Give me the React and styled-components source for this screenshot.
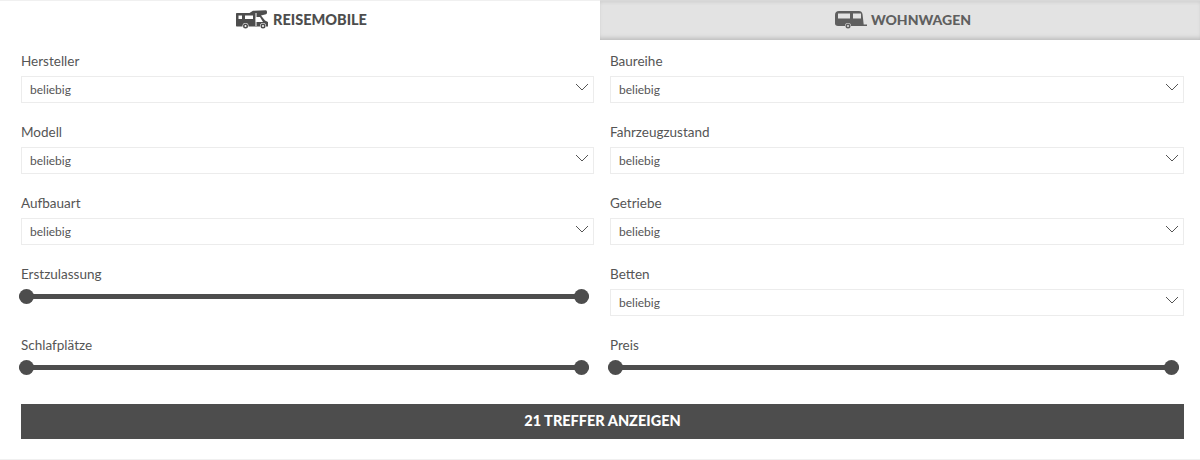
import React from 'react';
import styled, { createGlobalStyle } from 'styled-components';

const Global = createGlobalStyle`
  html, body { margin: 0; padding: 0; background: #fff; }
  body { font-family: "Lato", "Liberation Sans", sans-serif; color: #4d4d4d; }
`;

const Page = styled.div`
  width: 1200px;
  height: 460px;
  box-sizing: border-box;
  border-bottom: 1px solid #f0f0f0;
  overflow: hidden;
`;

const Tabs = styled.div`
  display: flex;
  height: 40px;
`;

const Tab = styled.div`
  flex: 0 0 600px;
  box-sizing: border-box;
  display: flex;
  align-items: center;
  justify-content: center;
  gap: ${({ $active }) => ($active ? '5px' : '4px')};
  padding: 0 0 2px ${({ $active }) => ($active ? '3px' : '6px')};
  font-size: ${({ $active }) => ($active ? '14.5px' : '14px')};
  font-weight: 900;
  color: ${({ $active }) => ($active ? '#4d4d4d' : '#5f5f5f')};
  background: ${({ $active }) => ($active ? '#fff' : '#e3e3e3')};
  border-top: 1px solid ${({ $active }) => ($active ? '#f0f0f0' : '#d8d8d8')};
  box-shadow: ${({ $active }) => ($active ? 'none' : 'inset 0 -4px 4px -2px #bdbdbd, inset 0 3px 3px -1px #d4d4d4')};
`;

const Form = styled.div`
  display: grid;
  grid-template-columns: 573px 574px;
  column-gap: 16px;
  row-gap: 11px;
  padding: 13px 16px 0 21px;
`;

const Field = styled.div`
  display: flex;
  flex-direction: column;
  height: 60px;
`;

const Label = styled.div`
  font-size: 13.5px;
  line-height: 16px;
  margin-bottom: 7px;
  color: #555;
`;

const Select = styled.div`
  box-sizing: border-box;
  height: 27px;
  display: flex;
  align-items: center;
  justify-content: space-between;
  padding: 0 4px 0 8px;
  font-size: 12px;
  color: #555;
  border: 1px solid #ececec;
`;

const Chevron = styled.svg`
  width: 14px;
  height: 8px;
  margin-bottom: 5px;
  fill: none;
  stroke: #555;
  stroke-width: 1;
`;

const Slider = styled.div`
  height: 5px;
  margin: 5px 5px 0 -2px;
  border-radius: 3px;
  background: #4d4d4d;
  display: flex;
  align-items: center;
  justify-content: space-between;
`;

const Thumb = styled.span`
  width: 15px;
  height: 15px;
  flex: none;
  border-radius: 50%;
  background: #4d4d4d;
`;

const Submit = styled.button`
  display: block;
  box-sizing: border-box;
  width: 1163px;
  height: 35px;
  margin: 7px 0 0 21px;
  padding: 0 0 2px;
  border: 0;
  background: #4d4d4d;
  color: #fff;
  font-family: "Lato", sans-serif;
  font-size: 14.5px;
  font-weight: 900;
`;

const MotorhomeIcon = () => (
  <svg width="32" height="19" viewBox="0 0 32 19" fill="#4d4d4d">
    <path
      fillRule="evenodd"
      d="M1 3h12.500L17 .8 30 .2c1.200 0 1.500 3.600 0 4L25 5.500l4 5 3 1.500v4.500H1c-.6 0-1-.4-1-1V4c0-.6.4-1 1-1zM2.500 5.500V9H6V5.500zm6.500 0V9h8V5.500zm11 1.500v1h-.2V12h7.200L24 7z"
    />
    <rect x="19.500" y="3" width="1" height="13" fill="#fff" />
    <circle cx="9.500" cy="16" r="3" fill="#fff" />
    <circle cx="9.500" cy="16" r="2.500" />
    <circle cx="9.500" cy="16" r="1" fill="#fff" />
    <circle cx="27" cy="16" r="3" fill="#fff" />
    <circle cx="27" cy="16" r="2.500" />
    <circle cx="27" cy="16" r="1" fill="#fff" />
  </svg>
);

const CaravanIcon = () => (
  <svg width="32" height="19" viewBox="0 0 32 19" fill="#5f5f5f">
    <path
      fillRule="evenodd"
      d="M4 1h20c2 0 3 1 3.500 3l1.200 10.500H32V16H3c-2 0-3-1-3-2.500V5c0-2.500 1.500-4 4-4zM3 3.500V8.500h12V3.500zm15 0V8.500h8V3.500z"
    />
    <circle cx="13" cy="16" r="3" fill="#e3e3e3" />
    <circle cx="13" cy="16" r="2.500" />
    <circle cx="13" cy="16" r="1" fill="#e3e3e3" />
  </svg>
);

const Dropdown = ({ label }) => (
  <Field>
    <Label>{label}</Label>
    <Select>
      beliebig
      <Chevron viewBox="0 0 14 8"><path d="M1 1l6 6 6-6" /></Chevron>
    </Select>
  </Field>
);

const Range = ({ label }) => (
  <Field>
    <Label>{label}</Label>
    <Slider><Thumb /><Thumb /></Slider>
  </Field>
);

const App = () => (
  <Page>
    <Global />
    <Tabs>
      <Tab $active><MotorhomeIcon />REISEMOBILE</Tab>
      <Tab><CaravanIcon />WOHNWAGEN</Tab>
    </Tabs>
    <Form>
      <Dropdown label="Hersteller" />
      <Dropdown label="Baureihe" />
      <Dropdown label="Modell" />
      <Dropdown label="Fahrzeugzustand" />
      <Dropdown label="Aufbauart" />
      <Dropdown label="Getriebe" />
      <Range label="Erstzulassung" />
      <Dropdown label="Betten" />
      <Range label="Schlafplätze" />
      <Range label="Preis" />
    </Form>
    <Submit>21 TREFFER ANZEIGEN</Submit>
  </Page>
);

export default App;
